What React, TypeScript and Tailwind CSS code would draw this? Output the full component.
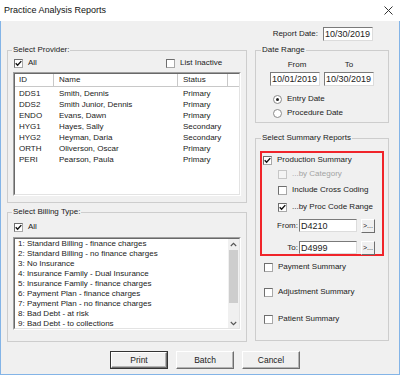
import React from "react";

const Check = ({ checked = false, disabled = false }: { checked?: boolean; disabled?: boolean }) => (
  <span
    className={`flex h-[9px] w-[9px] shrink-0 items-center justify-center border ${
      disabled ? "border-[#c6c6c6] bg-[#f4f4f4]" : "border-t-[#6e6e6e] border-l-[#6e6e6e] border-b-[#a8a8a8] border-r-[#a8a8a8] bg-white"
    }`}
  >
    {checked && (
      <svg width="7" height="7" viewBox="0 0 7 7">
        <path d="M0.7 3.3 L2.6 5.3 L6.3 1.1" fill="none" stroke="#111" strokeWidth="1.4" />
      </svg>
    )}
  </span>
);

const Radio = ({ checked = false }: { checked?: boolean }) => (
  <span className="flex h-[9px] w-[9px] shrink-0 items-center justify-center rounded-full border border-[#8a8a8a] bg-white">
    {checked && <span className="h-[3px] w-[3px] rounded-full bg-[#222]" />}
  </span>
);

const CheckRow = ({
  label,
  checked = false,
  disabled = false,
  className = "",
}: {
  label: string;
  checked?: boolean;
  disabled?: boolean;
  className?: string;
}) => (
  <div className={`flex h-[10px] items-center gap-[5px] whitespace-nowrap leading-[10px] ${className}`}>
    <Check checked={checked} disabled={disabled} />
    <span className={disabled ? "text-[#a3a3a3]" : ""}>{label}</span>
  </div>
);

const Field = ({ value, className = "" }: { value: string; className?: string }) => (
  <div
    className={`flex items-center whitespace-nowrap border border-t-[#7a7a7a] border-l-[#7a7a7a] border-b-[#dcdcdc] border-r-[#dcdcdc] bg-white pl-[1px] text-[9px] leading-[10px] ${className}`}
  >
    {value}
  </div>
);

const Btn = ({ label, def = false }: { label: string; def?: boolean }) => (
  <div className={`h-[18px] w-[58px] ${def ? "border border-[#333]" : ""}`}>
    <div className="flex h-full w-full items-center justify-center border border-t-white border-l-white border-b-[#6e6e6e] border-r-[#6e6e6e] bg-[#f0f0f0] text-[8.5px] shadow-[inset_-1px_-1px_0_#b4b4b4]">
      {label}
    </div>
  </div>
);

const providers = [
  ["DDS1", "Smith, Dennis", "Primary"],
  ["DDS2", "Smith Junior, Dennis", "Primary"],
  ["ENDO", "Evans, Dawn", "Primary"],
  ["HYG1", "Hayes, Sally", "Secondary"],
  ["HYG2", "Heyman, Daria", "Secondary"],
  ["ORTH", "Oliverson, Oscar", "Primary"],
  ["PERI", "Pearson, Paula", "Primary"],
];

const billing = [
  "1: Standard Billing - finance charges",
  "2: Standard Billing - no finance charges",
  "3: No Insurance",
  "4: Insurance Family - Dual Insurance",
  "5: Insurance Family - finance charges",
  "6: Payment Plan - finance charges",
  "7: Payment Plan - no finance charges",
  "8: Bad Debt - at risk",
  "9: Bad Debt - to collections",
];

export default function App() {
  return (
    <div className="flex h-[375px] w-[400px] flex-col overflow-hidden bg-[#f0f0f0] font-['Liberation_Sans',Arial,sans-serif] text-[8px] text-[#222]">
      {/* Title bar */}
      <div className="flex h-[21px] shrink-0 items-center justify-between bg-white pl-[4px] pr-[7px]">
        <span className="text-[9px] text-[#111]">Practice Analysis Reports</span>
        <svg width="9" height="9" viewBox="0 0 9 9">
          <path d="M0.5 0.5 L8.5 8.5 M8.5 0.5 L0.5 8.5" stroke="#333" strokeWidth="1" fill="none" />
        </svg>
      </div>

      {/* Body */}
      <div className="flex flex-1 flex-col border-x border-b border-[#83b4e7] pl-[6px]">
        {/* Report date */}
        <div className="mt-[6px] flex h-[14px] w-[382px] items-center justify-end pr-[16px]">
          <span className="mr-[5px] whitespace-nowrap">Report Date:</span>
          <Field value="10/30/2019" className="h-[14px] w-[50px]" />
        </div>

        {/* Main */}
        <div className="mt-[4px] flex gap-[8px]">
          {/* Left column */}
          <div className="flex w-[240px] flex-col">
            <fieldset className="border border-[#cdcdcd] px-[5px] pb-[6px]">
              <legend className="ml-[-1px] h-[10px] px-[1px] leading-[10px]">Select Provider:</legend>
              <div className="mt-[3px] flex h-[10px] items-center">
                <CheckRow label="All" checked className="ml-[1px] w-[152px]" />
                <CheckRow label="List Inactive" />
              </div>
              <div className="mt-[4px] h-[124px] border border-t-[#a0a0a0] border-l-[#a0a0a0] border-b-white border-r-white">
                <div className="h-full overflow-hidden border border-t-[#696969] border-l-[#696969] border-b-[#e3e3e3] border-r-[#e3e3e3] bg-white">
                  <div className="flex h-[13px] border-b border-[#c8c8c8] leading-[12px]">
                    <div className="w-[39px] border-r border-[#c8c8c8] pl-[4px]">ID</div>
                    <div className="w-[124px] border-r border-[#c8c8c8] pl-[5px]">Name</div>
                    <div className="w-[50px] border-r border-[#c8c8c8] pl-[5px]">Status</div>
                    <div className="flex-1" />
                  </div>
                  <div className="pt-[1px]">
                    {providers.map((p) => (
                      <div key={p[0]} className="flex h-[11px] items-center whitespace-nowrap leading-[11px]">
                        <div className="w-[39px] pl-[4px]">{p[0]}</div>
                        <div className="w-[124px] pl-[5px]">{p[1]}</div>
                        <div className="w-[50px] pl-[5px]">{p[2]}</div>
                      </div>
                    ))}
                  </div>
                </div>
              </div>
            </fieldset>

            <fieldset className="mt-[4px] border border-[#cdcdcd] px-[5px] pb-[11px]">
              <legend className="ml-[-1px] h-[10px] px-[1px] leading-[10px]">Select Billing Type:</legend>
              <CheckRow label="All" checked className="ml-[1px] mt-[5px]" />
              <div className="mt-[5px] h-[93px] border border-t-[#a0a0a0] border-l-[#a0a0a0] border-b-white border-r-white">
                <div className="flex h-full overflow-hidden border border-t-[#696969] border-l-[#696969] border-b-[#e3e3e3] border-r-[#e3e3e3] bg-white">
                  <div className="flex-1 overflow-hidden">
                    {billing.map((b) => (
                      <div key={b} className="flex h-[10px] items-center whitespace-nowrap pl-[3px] leading-[10px]">
                        {b}
                      </div>
                    ))}
                  </div>
                  <div className="flex w-[11px] flex-col bg-[#f0f0f0]">
                    <div className="flex h-[10px] items-center justify-center">
                      <svg width="7" height="5" viewBox="0 0 7 5">
                        <path d="M0.8 4 L3.5 1.3 L6.2 4" fill="none" stroke="#555" strokeWidth="1.1" />
                      </svg>
                    </div>
                    <div className="mx-[1px] mt-[1px] h-[53px] bg-[#cdcdcd]" />
                    <div className="flex-1" />
                    <div className="flex h-[10px] items-center justify-center">
                      <svg width="7" height="5" viewBox="0 0 7 5">
                        <path d="M0.8 1 L3.5 3.7 L6.2 1" fill="none" stroke="#555" strokeWidth="1.1" />
                      </svg>
                    </div>
                  </div>
                </div>
              </div>
            </fieldset>
          </div>

          {/* Right column */}
          <div className="flex w-[134px] flex-col">
            <fieldset className="border border-[#cdcdcd] pb-[4px]">
              <legend className="ml-[5px] h-[10px] px-[1px] leading-[10px]">Date Range</legend>
              <div className="mt-[5px] flex h-[10px] justify-center gap-[4px] leading-[10px]">
                <div className="w-[50px] pl-[4px] text-center">From</div>
                <div className="w-[50px] text-center">To</div>
              </div>
              <div className="mt-[2px] flex justify-center gap-[4px]">
                <Field value="10/01/2019" className="h-[14px] w-[50px]" />
                <Field value="10/30/2019" className="h-[14px] w-[50px]" />
              </div>
              <div className="mt-[8px] flex h-[10px] items-center gap-[5px] whitespace-nowrap pl-[17px] leading-[10px]">
                <Radio checked />
                <span>Entry Date</span>
              </div>
              <div className="mt-[4px] flex h-[10px] items-center gap-[5px] whitespace-nowrap pl-[17px] leading-[10px]">
                <Radio />
                <span>Procedure Date</span>
              </div>
            </fieldset>

            <fieldset className="mt-[10px] border border-[#cdcdcd] pb-[16px]">
              <legend className="ml-[5px] h-[10px] whitespace-nowrap px-[1px] leading-[10px]">Select Summary Reports</legend>
              <div className="ml-[4px] mt-[8px] w-[124px] border-2 border-[#f0242a]">
                <CheckRow label="Production Summary" checked className="ml-[1px] mt-[2px]" />
                <CheckRow label="...by Category" disabled className="ml-[16px] mt-[4px]" />
                <CheckRow label="Include Cross Coding" className="ml-[16px] mt-[6px]" />
                <CheckRow label="...by Proc Code Range" checked className="ml-[16px] mt-[7px]" />
                <div className="mt-[7px] flex h-[13px] items-center">
                  <span className="w-[36px] text-right">From:</span>
                  <Field value="D4210" className="ml-[1px] h-[13px] w-[58px]" />
                  <div className="ml-[4px] flex h-[14px] w-[14px] items-center justify-center border border-t-white border-l-white border-b-[#6e6e6e] border-r-[#6e6e6e] text-[7px] leading-[8px]">
                    &gt;...
                  </div>
                </div>
                <div className="mt-[9px] flex h-[13px] items-center">
                  <span className="w-[36px] text-right">To:</span>
                  <Field value="D4999" className="ml-[1px] h-[13px] w-[58px]" />
                  <div className="ml-[4px] flex h-[14px] w-[14px] items-center justify-center border border-t-white border-l-white border-b-[#6e6e6e] border-r-[#6e6e6e] text-[7px] leading-[8px]">
                    &gt;...
                  </div>
                </div>
              </div>
              <CheckRow label="Payment Summary" className="ml-[8px] mt-[6px]" />
              <CheckRow label="Adjustment Summary" className="ml-[8px] mt-[15px]" />
              <CheckRow label="Patient Summary" className="ml-[8px] mt-[17px]" />
            </fieldset>
          </div>
        </div>

        {/* Buttons */}
        <div className="ml-[103px] mt-[9px] flex gap-[8px]">
          <Btn label="Print" def />
          <Btn label="Batch" />
          <Btn label="Cancel" />
        </div>
      </div>
    </div>
  );
}
